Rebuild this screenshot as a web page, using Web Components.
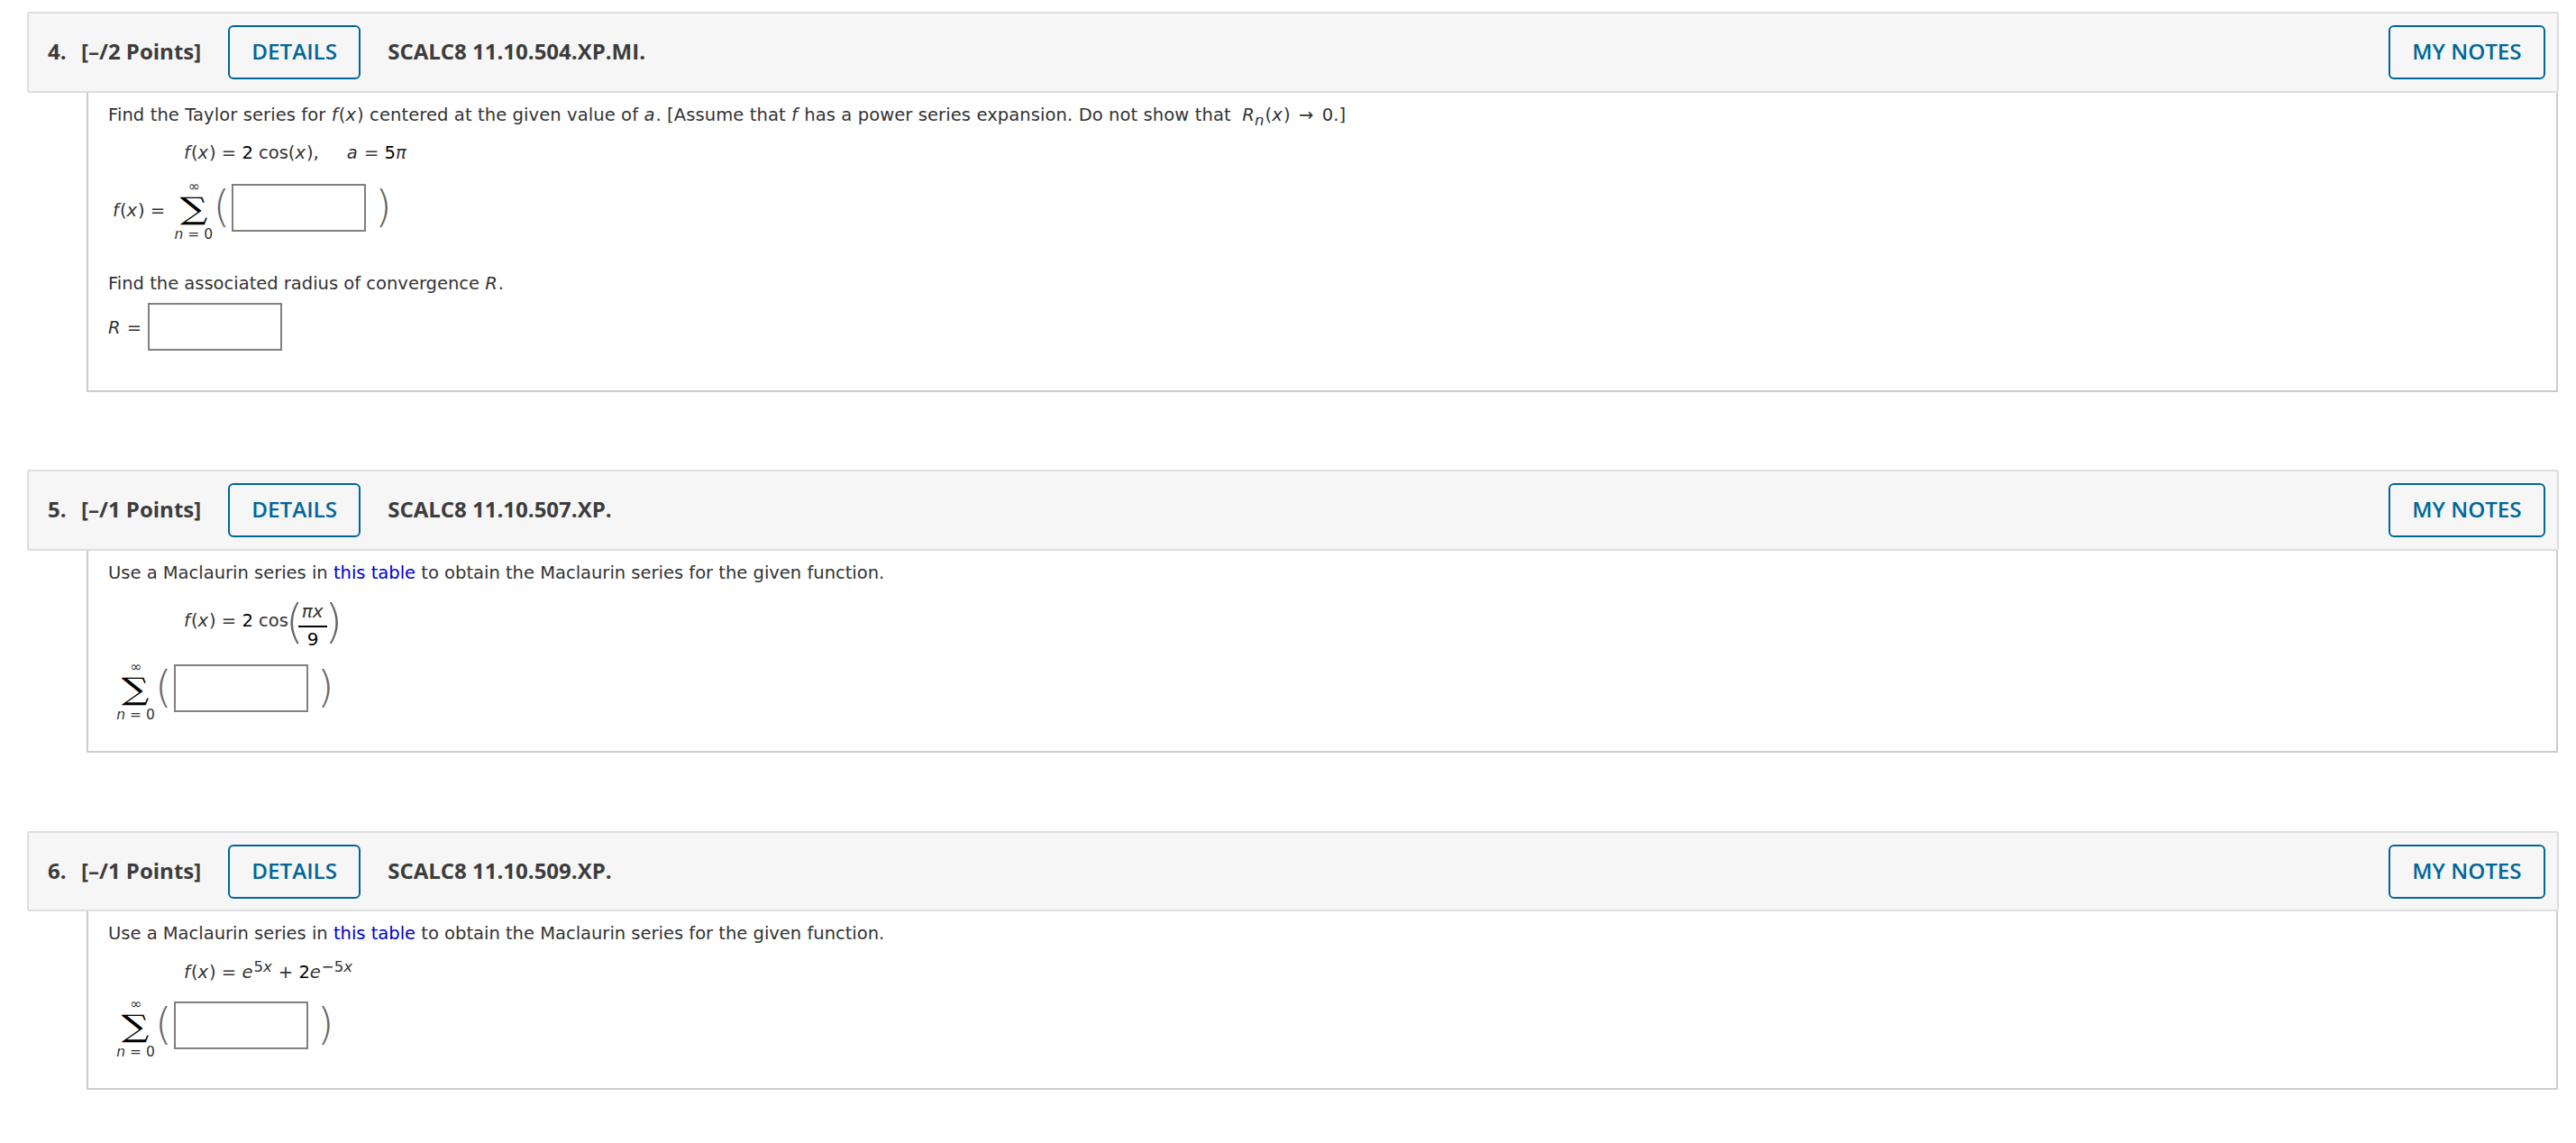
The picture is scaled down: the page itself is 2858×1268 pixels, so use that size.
<!DOCTYPE html>
<html>
<head>
<meta charset="utf-8">
<title>Questions</title>
<style>
  html, body { margin: 0; background: #fff; }
  body { padding: 13px 19px 0 30px; font-family: "DejaVu Sans", Verdana, sans-serif; font-size: 19.5px; color: #333; }
  q-card + q-card { margin-top: 86px; }
  i { font-style: italic; padding-right: 1px; }
  b { font-weight: normal; color: #000; }
  a { color: #00c; text-decoration: none; }
  sub, sup { font-size: 16.5px; line-height: 0; }
</style>
</head>
<body>

<template id="cardTpl">
  <style>
    :host { display: block; }
    header {
      display: flex; align-items: center; height: var(--head, 90px); box-sizing: border-box;
      padding: 0 13px 0 21px; background: #f6f6f6; border: 2px solid #ddd; border-radius: 3px;
      font: 700 24px/30px "Open Sans", sans-serif; color: #3c3c3c;
    }
    .num { margin-right: 4px; white-space: pre; }
    .code { margin-left: 30px; flex: 1; }
    button {
      height: 60px; box-sizing: border-box; background: none; border: 2px solid #006699; border-radius: 6px;
      font: 600 24.2px/28px "Open Sans", sans-serif; color: #006699; padding: 0 0 2px; width: 174px;
    }
    .details { margin-left: 30px; width: 147px; }
    section {
      margin: 0 1px 0 66px; padding: 10px 22px var(--pad, 31px); border: 2px solid #ccc; border-top: 0;
    }
    header span { position: relative; top: -1px; }
  </style>
  <header>
    <span class="num"></span>
    <span class="pts"></span>
    <button class="details">DETAILS</button>
    <span class="code"></span>
    <button>MY NOTES</button>
  </header>
  <section><slot></slot></section>
</template>

<template id="lineTpl">
  <style>
    :host { display: flex; align-items: center; min-height: 26px; line-height: 26px; padding-top: 2px; white-space: pre; }
  </style>
  <slot></slot>
</template>

<template id="boxTpl">
  <style>
    :host { display: block; width: 149px; height: 53px; box-sizing: border-box; border: 2px solid #808080; background: #fff; flex: none; }
  </style>
</template>

<template id="sumTpl">
  <style>
    :host { display: flex; align-items: flex-start; height: 68px; padding-left: 5px; white-space: pre; }
    .lead { align-self: center; margin-right: 2px; }
    .sum { display: flex; flex-direction: column; align-items: center; box-sizing: border-box; width: 47px; height: 68px; padding-top: 1px; color: #333; font-size: 15.5px; line-height: 14px; }
    .sig { height: 39px; font: 34px/35px "DejaVu Serif", serif; color: #000; transform: scaleX(1.26); }
    .p { font: 200 48px/52px "DejaVu Sans", sans-serif; color: #666; }
    .open { margin: 4px 2px 0 -2px; }
    .close { margin: 4px 0 0 10px; }
    ::slotted(answer-box) { margin-top: 5px; }
  </style>
  <span class="lead"><slot name="lead"></slot></span>
  <span class="sum"><span>∞</span><span class="sig">∑</span><span><i>n</i> = 0</span></span>
  <span class="p open">(</span>
  <slot></slot>
  <span class="p close">)</span>
</template>

<template id="fracTpl">
  <style>
    :host { display: inline-flex; flex-direction: column; align-items: center; width: 32px; line-height: 24px; font-size: 20px; }
    .n { height: 28px; }
    .d { width: 100%; text-align: center; border-top: 2px solid #000; padding-top: 1px; color: #000; }
  </style>
  <span class="n"><slot name="num"></slot></span>
  <span class="d"><slot name="den"></slot></span>
</template>

<template id="parenTpl">
  <style>
    :host { display: inline-flex; align-items: center; height: 55px; }
    span { font: 200 52px/46px "DejaVu Sans", sans-serif; color: #666; margin-bottom: 9px; }
    .open { margin-left: -3px; margin-right: -6px; }
    .close { margin-left: -3px; }
  </style>
  <span class="open">(</span><slot></slot><span class="close">)</span>
</template>

<q-card num="4." points="[–/2 Points]" code="SCALC8 11.10.504.XP.MI." style="--pad:44px">
  <q-line style="letter-spacing:.1px">Find the Taylor series for <i>f</i>(<i>x</i>) centered at the given value of <i>a</i>. [Assume that <i>f</i> has a power series expansion. Do not show that  <i>R<sub>n</sub></i>(<i>x</i>) <span style="padding:0 3px">→</span> 0.]</q-line>
  <q-line style="margin:14px 0 16px 84px"><span><i>f</i>(<i>x</i>) = <b>2</b> cos(<i>x</i>),     <i>a</i> = <b>5</b><i>π</i></span></q-line>
  <q-sum><span slot="lead"><i>f</i>(<i>x</i>) = </span><answer-box></answer-box></q-sum>
  <q-line style="margin:33px 0 8px"><span>Find the associated radius of convergence <i>R</i>.</span></q-line>
  <q-line style="padding-top:0"><span style="margin-right:1px;padding-top:2px"><i>R</i> = </span><answer-box></answer-box></q-line>
</q-card>

<q-card num="5." points="[–/1 Points]" code="SCALC8 11.10.507.XP." style="--pad:33px">
  <q-line>Use a Maclaurin series in <a>this table</a> to obtain the Maclaurin series for the given function.</q-line>
  <q-line style="margin:17px 0 11px 84px;padding-top:0"><span style="margin-bottom:9px"><i>f</i>(<i>x</i>) = <b>2</b> cos</span><q-paren><q-frac><span slot="num"><i>πx</i></span><span slot="den">9</span></q-frac></q-paren></q-line>
  <q-sum><answer-box></answer-box></q-sum>
</q-card>

<q-card num="6." points="[–/1 Points]" code="SCALC8 11.10.509.XP." style="--pad:33px;--head:89px;margin-top:87px">
  <q-line>Use a Maclaurin series in <a>this table</a> to obtain the Maclaurin series for the given function.</q-line>
  <q-line style="margin:15px 0 14px 84px"><span><i>f</i>(<i>x</i>) = <i>e</i><sup>5<i>x</i></sup> + <b>2</b><i>e</i><sup>−5<i>x</i></sup></span></q-line>
  <q-sum><answer-box></answer-box></q-sum>
</q-card>

<script>
  function mount(el, id) {
    let root = el.attachShadow({mode: 'open'});
    root.appendChild(document.getElementById(id).content.cloneNode(true));
    return root;
  }

  class QCard extends HTMLElement {
    constructor() {
      super();
      let root = mount(this, 'cardTpl');
      root.querySelector('.num').textContent = this.getAttribute('num') + '  ';
      root.querySelector('.pts').textContent = this.getAttribute('points');
      root.querySelector('.code').textContent = this.getAttribute('code');
    }
  }
  class QLine extends HTMLElement {
    constructor() { super(); mount(this, 'lineTpl'); }
  }
  class AnswerBox extends HTMLElement {
    constructor() { super(); mount(this, 'boxTpl'); }
  }
  class QSum extends HTMLElement {
    constructor() { super(); mount(this, 'sumTpl'); }
  }
  class QFrac extends HTMLElement {
    constructor() { super(); mount(this, 'fracTpl'); }
  }
  class QParen extends HTMLElement {
    constructor() { super(); mount(this, 'parenTpl'); }
  }

  customElements.define('q-card', QCard);
  customElements.define('q-line', QLine);
  customElements.define('answer-box', AnswerBox);
  customElements.define('q-sum', QSum);
  customElements.define('q-frac', QFrac);
  customElements.define('q-paren', QParen);
</script>
</body>
</html>
